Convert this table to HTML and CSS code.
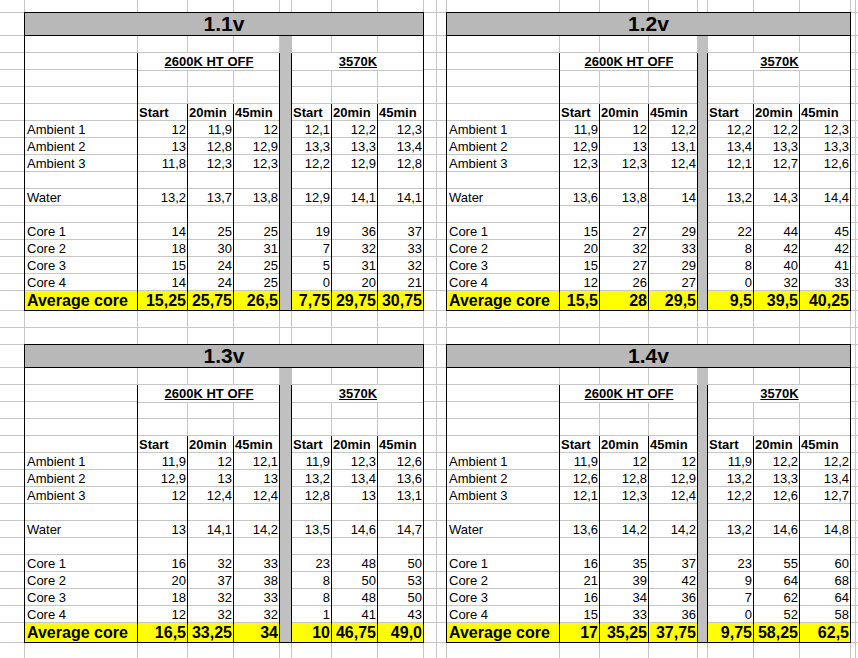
FILE: index.html
```html
<!DOCTYPE html>
<html lang="en">
<head>
<meta charset="utf-8">
<title>CPU temperatures by voltage</title>
<link rel="stylesheet" href="styles.css">
</head>
<body>
<main class="sheet">

<section class="blk narrow b1">
  <h2 class="title">1.1v</h2>
  <div class="r pre"><span class="sep"></span></div>
  <div class="r heads"><span class="k"></span><span class="grp k">2600K HT OFF</span><span class="sep"></span><span class="grp">3570K</span></div>
  <div class="r gap"><span class="k"></span><span></span><span></span><span class="k"></span><span class="sep"></span></div>
  <div class="r gap"><span class="k"></span><span></span><span></span><span class="k"></span><span class="sep"></span></div>
  <div class="r d h"><span></span><span>Start</span><span>20min</span><span>45min</span><span></span><span>Start</span><span>20min</span><span>45min</span></div>
  <div class="r d"><span>Ambient 1</span><span>12</span><span>11,9</span><span>12</span><span></span><span>12,1</span><span>12,2</span><span>12,3</span></div>
  <div class="r d"><span>Ambient 2</span><span>13</span><span>12,8</span><span>12,9</span><span></span><span>13,3</span><span>13,3</span><span>13,4</span></div>
  <div class="r d"><span>Ambient 3</span><span>11,8</span><span>12,3</span><span>12,3</span><span></span><span>12,2</span><span>12,9</span><span>12,8</span></div>
  <div class="r d"><span></span><span></span><span></span><span></span><span></span><span></span><span></span><span></span></div>
  <div class="r d"><span>Water</span><span>13,2</span><span>13,7</span><span>13,8</span><span></span><span>12,9</span><span>14,1</span><span>14,1</span></div>
  <div class="r d"><span></span><span></span><span></span><span></span><span></span><span></span><span></span><span></span></div>
  <div class="r d"><span>Core 1</span><span>14</span><span>25</span><span>25</span><span></span><span>19</span><span>36</span><span>37</span></div>
  <div class="r d"><span>Core 2</span><span>18</span><span>30</span><span>31</span><span></span><span>7</span><span>32</span><span>33</span></div>
  <div class="r d"><span>Core 3</span><span>15</span><span>24</span><span>25</span><span></span><span>5</span><span>31</span><span>32</span></div>
  <div class="r d"><span>Core 4</span><span>14</span><span>24</span><span>25</span><span></span><span>0</span><span>20</span><span>21</span></div>
  <div class="r d avg"><span>Average core</span><span>15,25</span><span>25,75</span><span>26,5</span><span></span><span>7,75</span><span>29,75</span><span>30,75</span></div>
</section>

<section class="blk wide b2">
  <h2 class="title">1.2v</h2>
  <div class="r pre"><span class="sep"></span></div>
  <div class="r heads"><span class="k"></span><span class="grp k">2600K HT OFF</span><span class="sep"></span><span class="grp">3570K</span></div>
  <div class="r gap"><span class="k"></span><span></span><span></span><span class="k"></span><span class="sep"></span></div>
  <div class="r gap"><span class="k"></span><span></span><span></span><span class="k"></span><span class="sep"></span></div>
  <div class="r d h"><span></span><span>Start</span><span>20min</span><span>45min</span><span></span><span>Start</span><span>20min</span><span>45min</span></div>
  <div class="r d"><span>Ambient 1</span><span>11,9</span><span>12</span><span>12,2</span><span></span><span>12,2</span><span>12,2</span><span>12,3</span></div>
  <div class="r d"><span>Ambient 2</span><span>12,9</span><span>13</span><span>13,1</span><span></span><span>13,4</span><span>13,3</span><span>13,3</span></div>
  <div class="r d"><span>Ambient 3</span><span>12,3</span><span>12,3</span><span>12,4</span><span></span><span>12,1</span><span>12,7</span><span>12,6</span></div>
  <div class="r d"><span></span><span></span><span></span><span></span><span></span><span></span><span></span><span></span></div>
  <div class="r d"><span>Water</span><span>13,6</span><span>13,8</span><span>14</span><span></span><span>13,2</span><span>14,3</span><span>14,4</span></div>
  <div class="r d"><span></span><span></span><span></span><span></span><span></span><span></span><span></span><span></span></div>
  <div class="r d"><span>Core 1</span><span>15</span><span>27</span><span>29</span><span></span><span>22</span><span>44</span><span>45</span></div>
  <div class="r d"><span>Core 2</span><span>20</span><span>32</span><span>33</span><span></span><span>8</span><span>42</span><span>42</span></div>
  <div class="r d"><span>Core 3</span><span>15</span><span>27</span><span>29</span><span></span><span>8</span><span>40</span><span>41</span></div>
  <div class="r d"><span>Core 4</span><span>12</span><span>26</span><span>27</span><span></span><span>0</span><span>32</span><span>33</span></div>
  <div class="r d avg"><span>Average core</span><span>15,5</span><span>28</span><span>29,5</span><span></span><span>9,5</span><span>39,5</span><span>40,25</span></div>
</section>

<section class="blk narrow b3">
  <h2 class="title">1.3v</h2>
  <div class="r pre"><span class="sep"></span></div>
  <div class="r heads"><span class="k"></span><span class="grp k">2600K HT OFF</span><span class="sep"></span><span class="grp">3570K</span></div>
  <div class="r gap"><span class="k"></span><span></span><span></span><span class="k"></span><span class="sep"></span></div>
  <div class="r gap"><span class="k"></span><span></span><span></span><span class="k"></span><span class="sep"></span></div>
  <div class="r d h"><span></span><span>Start</span><span>20min</span><span>45min</span><span></span><span>Start</span><span>20min</span><span>45min</span></div>
  <div class="r d"><span>Ambient 1</span><span>11,9</span><span>12</span><span>12,1</span><span></span><span>11,9</span><span>12,3</span><span>12,6</span></div>
  <div class="r d"><span>Ambient 2</span><span>12,9</span><span>13</span><span>13</span><span></span><span>13,2</span><span>13,4</span><span>13,6</span></div>
  <div class="r d"><span>Ambient 3</span><span>12</span><span>12,4</span><span>12,4</span><span></span><span>12,8</span><span>13</span><span>13,1</span></div>
  <div class="r d"><span></span><span></span><span></span><span></span><span></span><span></span><span></span><span></span></div>
  <div class="r d"><span>Water</span><span>13</span><span>14,1</span><span>14,2</span><span></span><span>13,5</span><span>14,6</span><span>14,7</span></div>
  <div class="r d"><span></span><span></span><span></span><span></span><span></span><span></span><span></span><span></span></div>
  <div class="r d"><span>Core 1</span><span>16</span><span>32</span><span>33</span><span></span><span>23</span><span>48</span><span>50</span></div>
  <div class="r d"><span>Core 2</span><span>20</span><span>37</span><span>38</span><span></span><span>8</span><span>50</span><span>53</span></div>
  <div class="r d"><span>Core 3</span><span>18</span><span>32</span><span>33</span><span></span><span>8</span><span>48</span><span>50</span></div>
  <div class="r d"><span>Core 4</span><span>12</span><span>32</span><span>32</span><span></span><span>1</span><span>41</span><span>43</span></div>
  <div class="r d avg"><span>Average core</span><span>16,5</span><span>33,25</span><span>34</span><span></span><span>10</span><span>46,75</span><span>49,0</span></div>
</section>

<section class="blk wide b4">
  <h2 class="title">1.4v</h2>
  <div class="r pre"><span class="sep"></span></div>
  <div class="r heads"><span class="k"></span><span class="grp k">2600K HT OFF</span><span class="sep"></span><span class="grp">3570K</span></div>
  <div class="r gap"><span class="k"></span><span></span><span></span><span class="k"></span><span class="sep"></span></div>
  <div class="r gap"><span class="k"></span><span></span><span></span><span class="k"></span><span class="sep"></span></div>
  <div class="r d h"><span></span><span>Start</span><span>20min</span><span>45min</span><span></span><span>Start</span><span>20min</span><span>45min</span></div>
  <div class="r d"><span>Ambient 1</span><span>11,9</span><span>12</span><span>12</span><span></span><span>11,9</span><span>12,2</span><span>12,2</span></div>
  <div class="r d"><span>Ambient 2</span><span>12,6</span><span>12,8</span><span>12,9</span><span></span><span>13,2</span><span>13,3</span><span>13,4</span></div>
  <div class="r d"><span>Ambient 3</span><span>12,1</span><span>12,3</span><span>12,4</span><span></span><span>12,2</span><span>12,6</span><span>12,7</span></div>
  <div class="r d"><span></span><span></span><span></span><span></span><span></span><span></span><span></span><span></span></div>
  <div class="r d"><span>Water</span><span>13,6</span><span>14,2</span><span>14,2</span><span></span><span>13,2</span><span>14,6</span><span>14,8</span></div>
  <div class="r d"><span></span><span></span><span></span><span></span><span></span><span></span><span></span><span></span></div>
  <div class="r d"><span>Core 1</span><span>16</span><span>35</span><span>37</span><span></span><span>23</span><span>55</span><span>60</span></div>
  <div class="r d"><span>Core 2</span><span>21</span><span>39</span><span>42</span><span></span><span>9</span><span>64</span><span>68</span></div>
  <div class="r d"><span>Core 3</span><span>16</span><span>34</span><span>36</span><span></span><span>7</span><span>62</span><span>64</span></div>
  <div class="r d"><span>Core 4</span><span>15</span><span>33</span><span>36</span><span></span><span>0</span><span>52</span><span>58</span></div>
  <div class="r d avg"><span>Average core</span><span>17</span><span>35,25</span><span>37,75</span><span></span><span>9,75</span><span>58,25</span><span>62,5</span></div>
</section>

</main>
</body>
</html>
```

FILE: styles.css
```css
* {
  box-sizing: border-box;
  margin: 0;
  padding: 0;
}

html,
body {
  background: #fff;
}

body {
  font-family: "Liberation Sans", Arial, sans-serif;
  font-size: 13px;
  color: #000;
  overflow: hidden;
}

/* Spreadsheet canvas: gridlines are the sheet's own background */
.sheet {
  --g: #c6c6c6;
  width: 858px;
  height: 658px;
  overflow: hidden;
  display: grid;
  grid-template-columns: 24px 400px 22px 405px 1fr;
  grid-template-rows: 12px 299px 33px 299px 1fr;
  background:
    linear-gradient(var(--g), var(--g)) 0 12px / 100% 1px no-repeat,
    repeating-linear-gradient(var(--g) 0 1px, transparent 1px 17px) 0 35px / 100% 256px no-repeat,
    repeating-linear-gradient(var(--g) 0 1px, transparent 1px 17px) 0 310px / 100% 35px no-repeat,
    repeating-linear-gradient(var(--g) 0 1px, transparent 1px 17px) 0 367px / 100% 256px no-repeat,
    linear-gradient(var(--g), var(--g)) 0 642px / 100% 1px no-repeat,
    linear-gradient(to right,
      transparent 0 24px, var(--g) 24px 25px,
      transparent 25px 137px, var(--g) 137px 138px,
      transparent 138px 187px, var(--g) 187px 188px,
      transparent 188px 233px, var(--g) 233px 234px,
      transparent 234px 279px, var(--g) 279px 280px,
      transparent 280px 291px, var(--g) 291px 292px,
      transparent 292px 331px, var(--g) 331px 332px,
      transparent 332px 377px, var(--g) 377px 378px,
      transparent 378px 423px, var(--g) 423px 424px,
      transparent 424px 436px, var(--g) 436px 437px,
      transparent 437px 446px, var(--g) 446px 447px,
      transparent 447px 559px, var(--g) 559px 560px,
      transparent 560px 599px, var(--g) 599px 600px,
      transparent 600px 648px, var(--g) 648px 649px,
      transparent 649px 697px, var(--g) 697px 698px,
      transparent 698px 707px, var(--g) 707px 708px,
      transparent 708px 753px, var(--g) 753px 754px,
      transparent 754px 799px, var(--g) 799px 800px,
      transparent 800px 850px, var(--g) 850px 851px,
      transparent 851px 855px, var(--g) 855px 856px,
      transparent 856px) 0 0 / 100% 100% no-repeat,
    #fff;
}

.b1 { grid-area: 2 / 2; }
.b2 { grid-area: 2 / 4; }
.b3 { grid-area: 4 / 2; }
.b4 { grid-area: 4 / 4; }

.blk {
  border: 1px solid #000;
  display: flex;
  flex-direction: column;
}

.title {
  flex: none;
  height: 23px;
  background: #b8b8b8;
  border-bottom: 1px solid #000;
  font-size: 21px;
  font-weight: bold;
  line-height: 22px;
  text-align: center;
}

.r {
  flex: none;
  display: grid;
  height: 17px;
  line-height: 16px;
}

.narrow .r {
  grid-template-columns: 113px 50px 46px 46px 12px 40px 46px 45px;
}

.wide .r {
  grid-template-columns: 113px 40px 49px 49px 10px 46px 46px 50px;
}

.r > span {
  padding: 1px 1px 0 2px;
  white-space: nowrap;
}

.k {
  border-right: 1px solid #000;
}

.sep {
  grid-column: 5;
  background: #c0c0c0;
}

.heads .sep,
.gap .sep {
  border-right: 1px solid #000;
}

.grp {
  grid-column: span 3;
  text-align: center;
  font-weight: bold;
  text-decoration: underline;
  background: #fff;
  border-bottom: 1px solid var(--g);
}

.d > span {
  border-right: 1px solid #000;
  text-align: right;
}

.d > span:first-child {
  text-align: left;
}

.d > span:nth-child(5) {
  background: #c0c0c0;
  padding: 0;
}

.d > span:last-child {
  border-right: 0;
}

.h > span {
  text-align: left;
  font-weight: bold;
  padding-left: 1px;
}

.avg {
  height: 19px;
  line-height: 18px;
  font-size: 16px;
  font-weight: bold;
}

.avg > span {
  background: #ff0;
}
```
